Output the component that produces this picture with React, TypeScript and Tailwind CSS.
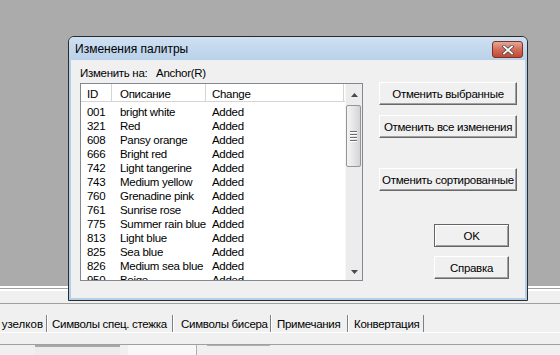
import React from 'react';

const rows: [string, string][] = [
  ['001', 'bright white'],
  ['321', 'Red'],
  ['608', 'Pansy orange'],
  ['666', 'Bright red'],
  ['742', 'Light tangerine'],
  ['743', 'Medium yellow'],
  ['760', 'Grenadine pink'],
  ['761', 'Sunrise rose'],
  ['775', 'Summer rain blue'],
  ['813', 'Light blue'],
  ['825', 'Sea blue'],
  ['826', 'Medium sea blue'],
  ['950', 'Beige'],
];

const btn =
  'flex items-center justify-center h-[23px] bg-[#f0f0f0] border border-t-white border-l-white border-r-[#696969] border-b-[#696969] shadow-[inset_-1px_-1px_0_#a0a0a0] text-black whitespace-nowrap';

const Arrow: React.FC<{ up?: boolean }> = ({ up }) => (
  <svg width="7" height="4" viewBox="0 0 7 4">
    <path d={up ? 'M0 4 L3.5 0 L7 4 Z' : 'M0 0 L3.5 4 L7 0 Z'} fill="#4a4a4a" />
  </svg>
);

const App: React.FC = () => {
  return (
    <div className="relative w-[560px] h-[355px] overflow-hidden bg-[#f0f0f0] font-['Liberation_Sans',Arial,sans-serif] text-[11.5px] leading-[14px] tracking-[-0.3px] text-black">
      {/* desktop / workspace */}
      <div className="h-[286px] bg-[#ababab]"></div>
      <div className="h-[2px] bg-white"></div>
      <div className="h-px bg-[#a0a0a0]"></div>
      <div className="h-[2px] bg-white"></div>
      <div className="h-[12px]"></div>
      <div className="h-px bg-[#a0a0a0]"></div>
      <div className="h-[11px]"></div>

      {/* bottom tabs */}
      <div className="flex h-[17px]">
        <div className="w-[47px] flex justify-end items-center overflow-hidden border-r border-[#808080] pr-[3px]">
          <span className="whitespace-nowrap tracking-normal">Символы узелков</span>
        </div>
        <div className="w-[126px] flex items-center border-l border-white border-r border-r-[#808080] pl-[4px] whitespace-nowrap overflow-hidden">
          Символы спец. стежка
        </div>
        <div className="w-[98px] flex items-center border-l border-white border-r border-r-[#808080] pl-[7px] whitespace-nowrap overflow-hidden">
          Символы бисера
        </div>
        <div className="w-[77px] flex items-center border-l border-white border-r border-r-[#808080] pl-[5px] whitespace-nowrap overflow-hidden">
          Примечания
        </div>
        <div className="w-[76px] flex items-center border-l border-white border-r border-r-[#808080] pl-[5px] whitespace-nowrap overflow-hidden">
          Конвертация
        </div>
      </div>
      <div className="h-px bg-white"></div>
      <div className="h-[11px]"></div>
      <div className="h-px bg-[#a0a0a0]"></div>
      <div className="flex h-[10px]">
        <div className="ml-[35px] w-[85px] border-t-2 border-[#a8a8a8] bg-[#ececec]"></div>
        <div className="ml-[8px] w-[69px] bg-[#f8f8f8] border-r border-[#b0b0b0]"></div>
        <div className="ml-[10px] w-[63px] border-t border-[#b0b0b0]"></div>
      </div>

      {/* dialog window */}
      <div className="absolute left-[68px] top-[36px] w-[460px] h-[265px] flex flex-col border border-[#2b2b2b] rounded-t-[6px] overflow-hidden bg-[#b4cfe9]">
        <div className="h-[23px] flex justify-between bg-linear-to-b from-[#cfe0f2] to-[#b9d1ea]">
          <span className="self-center pl-[6px] text-[12px] tracking-normal text-black">Изменения палитры</span>
          <div className="mt-[4px] mr-[4px] w-[31px] h-[17px] flex items-center justify-center rounded-[3px] border border-[#7b3227] bg-linear-to-b from-[#e7a698] via-[#d26d5b] to-[#c4462f]">
            <svg width="12" height="10" viewBox="0 0 12 10">
              <path d="M2 1.5 L10 8.5 M10 1.5 L2 8.5" stroke="#4a4a4a" strokeWidth="3.4" strokeLinecap="square" />
              <path d="M2 1.5 L10 8.5 M10 1.5 L2 8.5" stroke="#ffffff" strokeWidth="1.8" strokeLinecap="square" />
            </svg>
          </div>
        </div>

        <div className="flex-1 mx-[2px] mb-[2px] bg-[#f0f0f0] flex">
          {/* left column */}
          <div className="pl-[9px] pt-[6px] flex flex-col">
            <div className="h-[14px] whitespace-nowrap">
              Изменить на:&nbsp;&nbsp;&nbsp;Anchor(R)
            </div>
            <div className="mt-[3px] w-[283px] h-[198px] border border-[#828790] bg-white flex overflow-hidden">
              <div className="w-[264px] flex flex-col">
                <div className="h-[18px] flex border-b border-[#d5d5d5] shrink-0">
                  <div className="w-[31px] pl-[6px] pt-[2px] border-r border-[#d5d5d5] flex items-center">ID</div>
                  <div className="w-[94px] pl-[8px] pt-[2px] border-r border-[#d5d5d5] flex items-center">Описание</div>
                  <div className="w-[138px] pl-[6px] pt-[2px] border-r border-[#d5d5d5] flex items-center">Change</div>
                </div>
                <div className="pt-[3px]">
                  {rows.map(([id, desc]) => (
                    <div key={id} className="flex h-[14px] whitespace-nowrap">
                      <div className="w-[39px] pl-[6px]">{id}</div>
                      <div className="w-[92px]">{desc}</div>
                      <div>Added</div>
                    </div>
                  ))}
                </div>
              </div>
              {/* scrollbar */}
              <div className="w-[17px] flex flex-col bg-[#ececec] border-l border-[#f6f6f6]">
                <div className="h-[21px] flex items-center justify-center">
                  <Arrow up />
                </div>
                <div className="w-[15px] h-[62px] rounded-[2px] border border-[#959595] bg-linear-to-r from-[#f4f4f4] via-[#e6e6e6] to-[#d4d4d4] flex flex-col items-center justify-center">
                  <div className="w-[7px] h-px bg-[#6e6e6e] shadow-[0_1px_0_#fff]"></div>
                  <div className="w-[7px] h-px bg-[#6e6e6e] shadow-[0_1px_0_#fff] mt-[2px]"></div>
                  <div className="w-[7px] h-px bg-[#6e6e6e] shadow-[0_1px_0_#fff] mt-[2px]"></div>
                  <div className="w-[7px] h-px bg-[#6e6e6e] shadow-[0_1px_0_#fff] mt-[2px]"></div>
                </div>
                <div className="flex-1"></div>
                <div className="h-[17px] flex items-center justify-center">
                  <Arrow />
                </div>
              </div>
            </div>
          </div>

          {/* buttons */}
          <div className="ml-[16px] pt-[22px] flex flex-col">
            <div className={`${btn} w-[138px]`}>Отменить выбранные</div>
            <div className={`${btn} w-[138px] mt-[10px]`}>Отменить все изменения</div>
            <div className={`${btn} w-[138px] mt-[30px]`}>Отменить сортированные</div>
            <div className="ml-[55px] mt-[33px] w-[75px] h-[23px] flex items-center justify-center bg-[#f0f0f0] border border-[#646464] shadow-[inset_1px_1px_0_#fff,inset_-1px_-1px_0_#a0a0a0]">
              OK
            </div>
            <div className={`${btn} ml-[55px] mt-[9px] w-[75px]`}>Справка</div>
          </div>
        </div>
      </div>
    </div>
  );
};

export default App;
